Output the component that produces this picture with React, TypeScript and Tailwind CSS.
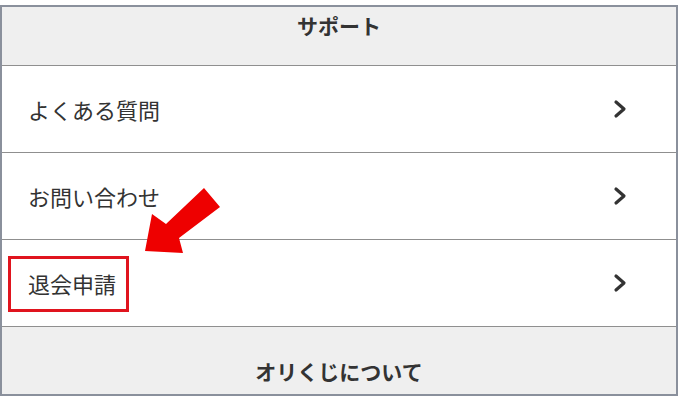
import React from "react";

const Chevron = () => (
  <svg width="14" height="20" viewBox="0 0 14 20" fill="none">
    <path d="M3 3 L11 10 L3 17" stroke="#333333" strokeWidth="3.2" strokeLinecap="round" strokeLinejoin="round" />
  </svg>
);

const Row = ({ label }: { label: string }) => (
  <div className="flex h-[87px] items-center justify-between border-b border-[#8f8f8f] bg-white pl-[26px] pr-[49px]">
    <span className="text-[22px] leading-[30px] text-[#333333]">{label}</span>
    <Chevron />
  </div>
);

export default function App() {
  return (
    <div
      className="relative h-[400px] w-[680px] overflow-hidden bg-white"
      style={{ fontFamily: '"Noto Sans CJK JP", "Noto Sans", sans-serif' }}
    >
      <div className="mt-[5px] w-[678px] border-2 border-[#8a909c]">
        <div className="flex h-[59px] justify-center border-b border-[#8f8f8f] bg-[#efefef] pt-[3px]">
          <span className="text-[21px] font-bold leading-[30px] text-[#333333]">サポート</span>
        </div>
        <Row label="よくある質問" />
        <Row label="お問い合わせ" />
        <Row label="退会申請" />
        <div className="flex h-[67px] justify-center bg-[#efefef] pt-[29px]">
          <span className="text-[21px] font-bold leading-[30px] text-[#333333]">オリくじについて</span>
        </div>
      </div>
      <div className="absolute left-[8px] top-[256px] h-[56px] w-[121px] border-[3px] border-[#e0141e]" />
      <svg className="absolute left-0 top-0" width="680" height="400" viewBox="0 0 680 400">
        <polygon
          points="145,251 152,214 166,224 204,188 220,207 179,238 183,253"
          fill="#ee0000"
        />
      </svg>
    </div>
  );
}
